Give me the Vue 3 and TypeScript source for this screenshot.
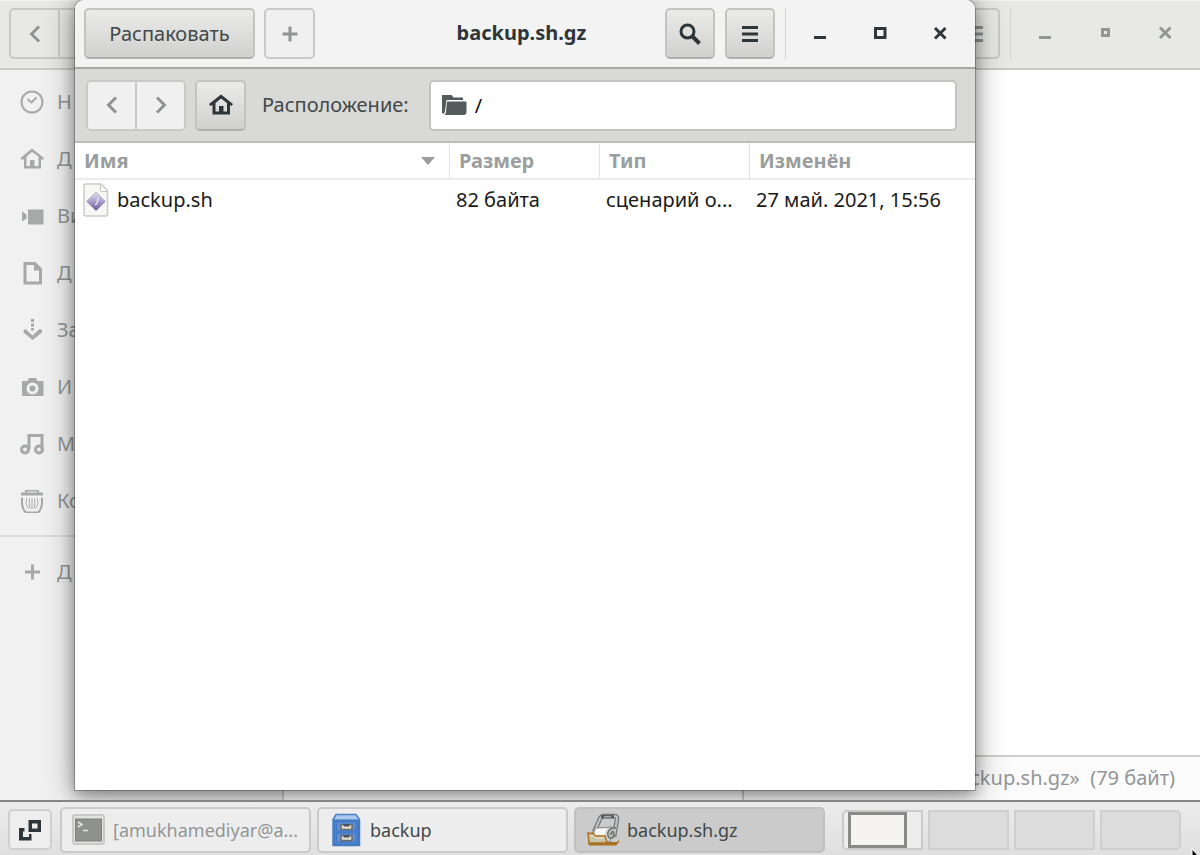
<script setup lang="ts">
import { ref } from 'vue'

interface Place { icon: string; short: string; label: string }
interface Entry { name: string; size: string; type: string; modified: string }

const places: Place[] = [
  { icon: 'recent', short: 'Н', label: 'Недавние' },
  { icon: 'home', short: 'Д', label: 'Домашняя папка' },
  { icon: 'video', short: 'Ви', label: 'Видео' },
  { icon: 'document', short: 'Д', label: 'Документы' },
  { icon: 'download', short: 'За', label: 'Загрузки' },
  { icon: 'camera', short: 'И', label: 'Изображения' },
  { icon: 'music', short: 'М', label: 'Музыка' },
  { icon: 'trash', short: 'Ко', label: 'Корзина' },
]

const entries: Entry[] = [
  { name: 'backup.sh', size: '82 байта', type: 'сценарий о...', modified: '27 май. 2021, 15:56' },
]

const location = ref('/')
const workspaces = [1, 2, 3, 4]
const currentWorkspace = ref(1)
</script>

<template>
  <div class="desktop">
    <section class="files" aria-label="Файлы">
      <header class="files-bar">
        <div class="linked">
          <button class="btn flat" aria-label="Назад">
            <svg width="24" height="24" viewBox="0 0 24 24"><path class="chev" d="M16 4.500 8.500 12l7.500 7.500" /></svg>
          </button>
          <button class="btn flat" aria-label="Вперёд">
            <svg width="24" height="24" viewBox="0 0 24 24"><path class="chev" d="M8.500 4.500 16 12l-7.500 7.500" /></svg>
          </button>
        </div>
        <div class="controls">
          <button class="btn flat" aria-label="Меню">
            <svg width="24" height="24" viewBox="0 0 24 24"><path d="M4 4h16v3H4zM4 10.500h16v3H4zM4 17h16v3H4z" /></svg>
          </button>
          <span class="divider"></span>
          <button class="wm" aria-label="Свернуть">
            <svg width="24" height="24" viewBox="0 0 24 24"><path d="M6 15h12v3H6z" /></svg>
          </button>
          <button class="wm" aria-label="Восстановить">
            <svg width="24" height="24" viewBox="0 0 24 24"><path fill-rule="evenodd" d="M8 7h9v9H8zM11 10v3h3v-3z" /></svg>
          </button>
          <button class="wm" aria-label="Закрыть">
            <svg width="24" height="24" viewBox="0 0 24 24"><path class="cross" d="m7 6.500 10.500 10.500m0-10.500L7 17" /></svg>
          </button>
        </div>
      </header>

      <div class="files-body">
        <nav class="sidebar">
          <a v-for="place in places" :key="place.icon" class="place" href="#" :aria-label="place.label">
            <svg width="24" height="24" viewBox="0 0 24 24" aria-hidden="true">
              <g v-if="place.icon === 'recent'" class="line">
                <circle cx="12" cy="12" r="10.500" /><path d="m7.500 9 4 3.500 5-5" />
              </g>
              <g v-else-if="place.icon === 'home'">
                <path fill-rule="evenodd" d="M12 1.500 24 11l-1.500 2L21 12v9.500H4V12l-2 1L.500 11zM12 5 6.500 9.500V19H10v-6h4.500v6h4V9.500z" />
              </g>
              <path v-else-if="place.icon === 'video'" d="M2 7.500 6.500 10.500v4L2 17.500zM8 5.500h15.500v15H8z" />
              <path v-else-if="place.icon === 'document'" fill-rule="evenodd" d="M3.500 1h12l6.500 6.500V23.500H3.500zM6.500 4v16.500H19V9.500h-5V4z" />
              <g v-else-if="place.icon === 'download'">
                <path d="M11 1h3v3h-3zM11 5.500h3v3h-3zM11 10h3v2.500h-3z" />
                <path d="m3.500 12 2-1 7 6.500 7-6.500 2.500 1v2.500L12.500 22l-9-7.500z" />
              </g>
              <path v-else-if="place.icon === 'camera'" fill-rule="evenodd" d="M2 6h5.500l1.500-3h7l1.500 3H23.500v15H2zM12.500 7.500a6 6 0 1 0 0 12 6 6 0 0 0 0-12zM12.500 10.500a3 3 0 1 1 0 6 3 3 0 0 1 0-6z" />
              <g v-else-if="place.icon === 'music'" class="bold-line">
                <circle cx="5" cy="17.500" r="3.500" /><circle cx="19" cy="17.500" r="3.500" /><path d="M9 17.500V3.500h13v14" />
              </g>
              <g v-else>
                <path fill-rule="evenodd" d="M5 1h14v2.500h4V6.500H1V3.500h4zM7 2.500v1h10v-1z" />
                <g class="line">
                  <path d="M2 8.500v6q.500 6 4 9h12q3.500-3 4-9v-6" />
                </g>
                <g class="thin">
                  <path d="M7 9c-1.500 4-1 7 1.500 10.500M12 9v11M17 9c1.500 4 1 7-1.500 10.500M9.500 9.500q-1 5 .500 10M14.500 9.500q1 5-.500 10" />
                </g>
              </g>
            </svg>
            <span>{{ place.short }}</span>
          </a>
          <a class="place others" href="#" aria-label="Другие места">
            <svg width="24" height="24" viewBox="0 0 24 24" aria-hidden="true"><path d="M11 4.500h3v6h6v3h-6v6h-3v-6H5v-3h6z" /></svg>
            <span>Д</span>
          </a>
        </nav>
        <div class="canvas">
          <output class="status">«backup.sh.gz»&nbsp; (79 байт)</output>
        </div>
      </div>
    </section>

    <main class="archive">
      <header class="archive-bar">
        <div class="group">
          <button class="btn extract">Распаковать</button>
          <button class="btn light" aria-label="Добавить">
            <svg width="24" height="24" viewBox="0 0 24 24"><path d="M10.500 4.500h3v6h6v3h-6v6h-3v-6h-6v-3h6z" /></svg>
          </button>
        </div>
        <h1>backup.sh.gz</h1>
        <div class="controls">
          <button class="btn" aria-label="Найти">
            <svg width="24" height="24" viewBox="0 0 24 24">
              <circle class="lens" cx="9.500" cy="9.500" r="6.500" /><path class="handle" d="m14.500 14.500 7 7" />
            </svg>
          </button>
          <button class="btn" aria-label="Меню">
            <svg width="24" height="24" viewBox="0 0 24 24"><path d="M4 4h16v3H4zM4 10.500h16v3H4zM4 17h16v3H4z" /></svg>
          </button>
          <span class="divider"></span>
          <button class="wm" aria-label="Свернуть">
            <svg width="24" height="24" viewBox="0 0 24 24"><path d="M6 15h12v3H6z" /></svg>
          </button>
          <button class="wm" aria-label="Развернуть">
            <svg width="24" height="24" viewBox="0 0 24 24"><path fill-rule="evenodd" d="M6 6h12.500v12H6zM9 9v6h6.500V9z" /></svg>
          </button>
          <button class="wm" aria-label="Закрыть">
            <svg width="24" height="24" viewBox="0 0 24 24"><path class="cross" d="m7 7 10.500 10.500m0-10.500L7 17.500" /></svg>
          </button>
        </div>
      </header>

      <div class="location-bar">
        <div class="linked">
          <button class="btn light" aria-label="Назад">
            <svg width="24" height="24" viewBox="0 0 24 24"><path class="chev" d="M16 4.500 8.500 12l7.500 7.500" /></svg>
          </button>
          <button class="btn light" aria-label="Вперёд">
            <svg width="24" height="24" viewBox="0 0 24 24"><path class="chev" d="M8 4.500 15.500 12 8 19.500" /></svg>
          </button>
        </div>
        <button class="btn home" aria-label="Домой">
          <svg width="24" height="24" viewBox="0 0 24 24">
            <path fill-rule="evenodd" d="M12 1.500 24 11l-1.500 2L21 12v9.500H3.500V12l-2 1L0 11zM12 5.500 6.500 10v8.500H10V13h4.500v5.500h3.500V10z" />
          </svg>
        </button>
        <label for="location">Расположение:</label>
        <div class="field">
          <svg width="26" height="24" viewBox="0 0 26 24" aria-hidden="true">
            <path d="M1 2h9.500l2 2.500H22V7H5.500L4 18l-1 3-2-1z" /><path d="M6 8.500h19.500V19q0 3-3 3H3.500q1.500-1 1.500-3z" />
          </svg>
          <input id="location" v-model="location" type="text" spellcheck="false" />
        </div>
      </div>

      <table>
        <colgroup><col class="c-name" /><col class="c-mid" /><col class="c-mid" /><col class="c-date" /></colgroup>
        <thead>
          <tr>
            <th scope="col" aria-sort="ascending">
              <button class="sort">Имя<svg width="14" height="8" viewBox="0 0 14 8" aria-hidden="true"><path d="M0 0h14L7 8z" /></svg></button>
            </th>
            <th scope="col"><button class="sort">Размер</button></th>
            <th scope="col"><button class="sort">Тип</button></th>
            <th scope="col"><button class="sort">Изменён</button></th>
          </tr>
        </thead>
        <tbody>
          <tr v-for="entry in entries" :key="entry.name">
            <td>
              <div class="file">
                <svg width="26" height="34" viewBox="0 0 26 34" aria-hidden="true">
                  <defs>
                    <linearGradient id="gem" x1="0" y1="0" x2="0" y2="1">
                      <stop offset="0" stop-color="#e3e0ef" /><stop offset=".5" stop-color="#a79fca" /><stop offset="1" stop-color="#6d5494" />
                    </linearGradient>
                  </defs>
                  <path d="M3 1h15l6.500 6.500V31q0 2-2 2H3q-2 0-2-2V3q0-2 2-2z" fill="#f7f7f5" stroke="#cbccc7" stroke-width="1.500" />
                  <path d="M17.500 2v5.500q0 1 1 1H24" fill="#fff" stroke="#c1c2bd" />
                  <path d="m13 9 9.500 9.500L13 28l-9.500-9.500z" fill="url(#gem)" stroke="#b9b6c9" />
                  <path d="M16 15c-1.500 0-1.500 1-1.500 3.500m-2.500 3c2 0 2.500-1 2.500-5" fill="none" stroke="#e8e5f3" stroke-width="1.500" />
                </svg>
                <span>{{ entry.name }}</span>
              </div>
            </td>
            <td>{{ entry.size }}</td>
            <td>{{ entry.type }}</td>
            <td>{{ entry.modified }}</td>
          </tr>
        </tbody>
      </table>
    </main>

    <footer class="taskbar">
      <button class="desk" aria-label="Свернуть все окна">
        <svg width="24" height="24" viewBox="0 0 24 24">
          <path fill-rule="evenodd" d="M10.500 2H23v12H10.500zM14 5.500v5h5.500v-5z" /><path d="M1 10h5.500v3.500H5V19h6v-3h2.500v6.500H1z" />
        </svg>
      </button>
      <button class="task minimized">
        <svg width="34" height="32" viewBox="0 0 34 32" aria-hidden="true">
          <rect x="1" y="1" width="31" height="29" rx="2" fill="#e2e2e0" stroke="#c9cac7" stroke-width="2" />
          <rect x="3.500" y="5" width="26" height="22" fill="#8f918f" stroke="#7f817f" />
          <path d="m6 8 4 2.500L6 13M11 16.500h5" fill="none" stroke="#e7e8e6" stroke-width="1.500" />
        </svg>
        <span>[amukhamediyar@a...</span>
      </button>
      <button class="task">
        <svg width="34" height="34" viewBox="0 0 34 34" aria-hidden="true">
          <path d="M7 1.500h20l3.500 5V32.500H4V6.500z" fill="#a9c8ee" stroke="#4b7fc4" stroke-width="1.500" />
          <path d="M5 7h24.500v25H5z" fill="#4b83d0" stroke="#3d70b8" />
          <path d="M7.500 9h19.500v9H7.500zM7.500 20h19.500v9H7.500z" fill="#5b91dc" stroke="#4074c0" />
          <path d="M12 11.500h11v5H12zM12 22.500h11v5H12z" fill="#e6e1d3" stroke="#6a6a66" stroke-width="1.500" />
          <path d="M14.500 11h6v2.500h-6zM14.500 22h6v2.500h-6z" fill="#4a5361" />
        </svg>
        <span>backup</span>
      </button>
      <button class="task active">
        <svg width="34" height="34" viewBox="0 0 34 34" aria-hidden="true">
          <path d="M2 29h29l2-2v2l-3 3.500H3z" fill="#a8701d" />
          <path d="m8 19 6-13q1-3 4-3h10q3.500 0 3 3l-3 18" fill="none" stroke="#74767a" stroke-width="4.500" />
          <path d="m8 19 6-13q1-3 4-3h10q3.500 0 3 3l-3 18" fill="none" stroke="#c4c6c6" stroke-width="2" />
          <path d="M15 2h13v3.500H15z" fill="#5a5e5e" />
          <path d="M18 3h7v1.500h-7z" fill="#a9acac" />
          <path d="m9 15 17-1-2 15-18-4z" fill="#d4d5d3" stroke="#8a8c8b" />
          <path d="m10 16 11-.500-3 7-9-.500z" fill="#f8f8f6" />
          <path d="M30 15c-7-1-9 4-8 8s7 2 6-2-3-2-3 1" fill="#b9bbbb" stroke="#6c6f70" stroke-width="1.500" />
          <path d="M2 20q3 1 5 0l2 3h10l2 7H3z" fill="#c8c6a4" stroke="#a8742a" stroke-width="1.500" />
          <path d="M4 23h4l2 2h8" fill="none" stroke="#eeebcf" />
        </svg>
        <span>backup.sh.gz</span>
      </button>
      <div class="pager">
        <button
          v-for="n in workspaces"
          :key="n"
          class="space"
          :class="{ current: n === currentWorkspace }"
          :aria-label="`Рабочее место ${n}`"
          @click="currentWorkspace = n"
        >
          <span v-if="n === currentWorkspace" class="mini"></span>
        </button>
      </div>
    </footer>

    <svg class="pointer" width="12" height="18" viewBox="0 0 12 18" aria-hidden="true">
      <path d="M1 1v15l4-4h6z" fill="#000" stroke="#fff" />
    </svg>
  </div>
</template>

<style>
body {
  margin: 0;
}
</style>

<style scoped>
.desktop {
  position: relative;
  display: flex;
  flex-direction: column;
  height: 100vh;
  overflow: hidden;
  font: 20px/28px "Noto Sans", "Open Sans", sans-serif;
  color: #414849;
  background: #fff;
}
.desktop * {
  box-sizing: border-box;
}
button,
input {
  margin: 0;
  padding: 0;
  border: 0;
  background: none;
  font: inherit;
  color: inherit;
}
svg {
  display: block;
  flex: none;
  fill: currentColor;
}
.line,
.bold-line,
.thin,
.chev,
.cross,
.lens,
.handle {
  fill: none;
  stroke: currentColor;
  stroke-width: 2;
}
.bold-line,
.chev,
.cross,
.lens {
  stroke-width: 3;
}
.thin {
  stroke-width: 1;
}
.handle {
  stroke-width: 4;
}

.files {
  flex: 1;
  min-height: 0;
  display: flex;
  flex-direction: column;
}
.files-bar {
  display: flex;
  justify-content: space-between;
  align-items: flex-start;
  height: 70px;
  padding: 7px 10px 0 9px;
  border-top: 1px solid #f3f3f2;
  border-bottom: 2px solid #c9cac7;
  background: #e8e8e6;
  color: #929696;
}
.files-body {
  flex: 1;
  min-height: 0;
  display: flex;
}
.sidebar {
  width: 284px;
  padding-top: 3px;
  border-right: 2px solid #cfd0ce;
  background: #f1f1f1;
  color: #a6a9a8;
}
.place {
  display: flex;
  align-items: center;
  gap: 13px;
  height: 57px;
  padding-left: 20px;
  color: inherit;
  text-decoration: none;
}
.place span {
  color: #939797;
}
.others {
  height: 71px;
  margin-top: 6px;
  border-top: 2px solid #dcdcdb;
}
.canvas {
  flex: 1;
  position: relative;
  background: #fff;
}
.status {
  position: absolute;
  right: 0;
  bottom: 0;
  left: 50%;
  height: 45px;
  padding: 7px 25px 0 0;
  border-top: 2px solid #cdcdc9;
  border-left: 2px solid #cdcdc9;
  background: #fbfbfb;
  color: #929696;
  text-align: right;
}

.controls,
.group,
.linked {
  display: flex;
}
.controls {
  gap: 10px;
}
.group {
  gap: 9px;
}
.btn {
  display: flex;
  align-items: center;
  justify-content: center;
  width: 51px;
  height: 51px;
  border: 2px solid #c3c4c1;
  border-bottom-color: #aeafab;
  border-radius: 5px;
  background: linear-gradient(#ebebea, #d0d0ce);
  color: #2f3639;
}
.btn.light {
  border-color: #c9cac7;
  background: #f0f0f0;
  color: #8f9393;
}
.btn.flat {
  border-color: #c9cac7;
  background: #e8e8e6;
  color: #8f9393;
}
.linked .btn:first-child {
  border-radius: 5px 0 0 5px;
}
.linked .btn:last-child {
  margin-left: -2px;
  border-radius: 0 5px 5px 0;
}
.btn.extract {
  width: 171px;
  color: #414849;
}
.divider {
  width: 1px;
  height: 51px;
  margin-right: -1px;
  background: #d3d4d1;
}
.wm {
  display: flex;
  align-items: center;
  justify-content: center;
  width: 50px;
  height: 50px;
}
.controls .btn {
  width: 50px;
}

.archive {
  position: absolute;
  top: 0;
  right: 225px;
  bottom: 65px;
  left: 75px;
  border-radius: 9px 9px 0 0;
  background: #fff;
  box-shadow: 0 0 0 1px rgba(0, 0, 0, 0.25), 0 4px 14px 1px rgba(0, 0, 0, 0.3), 0 4px 32px 2px rgba(0, 0, 0, 0.3);
}
.archive-bar {
  display: grid;
  grid-template-columns: 1fr auto 1fr;
  height: 69px;
  padding: 8px 10px 0 9px;
  border-bottom: 2px solid #a6a7a4;
  border-radius: 9px 9px 0 0;
  background: #f3f3f3;
  color: #2f3639;
}
.archive-bar .controls {
  justify-content: flex-end;
}
h1 {
  margin: 0;
  padding-right: 6px;
  font-size: 20px;
  line-height: 50px;
}
.location-bar {
  display: flex;
  align-items: center;
  height: 74px;
  padding: 0 18px 0 11px;
  border-bottom: 2px solid #bcbdb9;
  background: #d9d9d7;
}
.home {
  margin: 0 16px 0 9px;
}
.field {
  flex: 1;
  display: flex;
  align-items: center;
  gap: 8px;
  height: 51px;
  margin-left: 20px;
  padding-left: 10px;
  border: 2px solid #c3c4c1;
  border-radius: 5px;
  background: #fff;
  color: #535b5b;
}
.field input {
  flex: 1;
  min-width: 0;
  height: 100%;
  outline: none;
  color: #111;
}
table {
  width: 100%;
  table-layout: fixed;
  border-collapse: separate;
  border-spacing: 0;
}
.c-name {
  width: 375px;
}
.c-mid {
  width: 150px;
}
th {
  height: 37px;
  padding: 0;
  border-right: 1px solid #e2e2e1;
  border-bottom: 2px solid #ececeb;
}
th:last-child {
  border-right: 0;
}
.sort {
  display: flex;
  align-items: center;
  justify-content: space-between;
  width: 100%;
  padding: 0 14px 0 9px;
  color: #9a9e9e;
  font-weight: bold;
}
td {
  height: 40px;
  padding: 0 0 0 6px;
  color: #1a1a1a;
  white-space: nowrap;
}
td:first-child {
  padding-left: 8px;
}
.file {
  display: flex;
  align-items: center;
  gap: 8px;
}

.taskbar {
  position: relative;
  display: flex;
  align-items: center;
  height: 55px;
  padding: 2px 19px 0 8px;
  border-top: 2px solid #858684;
  background: linear-gradient(#ececec, #dfdfdf);
}
.desk {
  display: flex;
  align-items: center;
  justify-content: center;
  width: 44px;
  height: 41px;
  margin-right: 8px;
  border: 2px solid #cfcfcf;
  border-radius: 5px;
  background: #eee;
  color: #2f3639;
}
.task {
  flex: 0 1 251px;
  min-width: 0;
  display: flex;
  align-items: center;
  gap: 7px;
  height: 46px;
  margin-right: 6px;
  padding-left: 10px;
  border: 2px solid #cacaca;
  border-radius: 5px;
  background: #ededed;
  font-size: 18px;
  white-space: nowrap;
}
.task.minimized {
  color: #929696;
}
.task.active {
  border-color: #c0c0c0;
  background: #cbcbcb;
}
.pager {
  display: flex;
  gap: 5px;
  margin-left: auto;
}
.space {
  width: 81px;
  height: 40px;
  border: 2px solid #cfcfcf;
  background: #dcdcdc;
}
.space.current {
  padding-left: 4px;
  border-color: #cacaca;
  background: #ededed;
}
.space:first-child {
  border-radius: 5px 0 0 5px;
}
.space:last-child {
  border-radius: 0 5px 5px 0;
}
.mini {
  display: block;
  width: 59px;
  height: 36px;
  border: 3px solid #888a88;
  background: #f5f4f2;
}
.pointer {
  position: absolute;
  right: -3px;
  bottom: -11px;
}
</style>
